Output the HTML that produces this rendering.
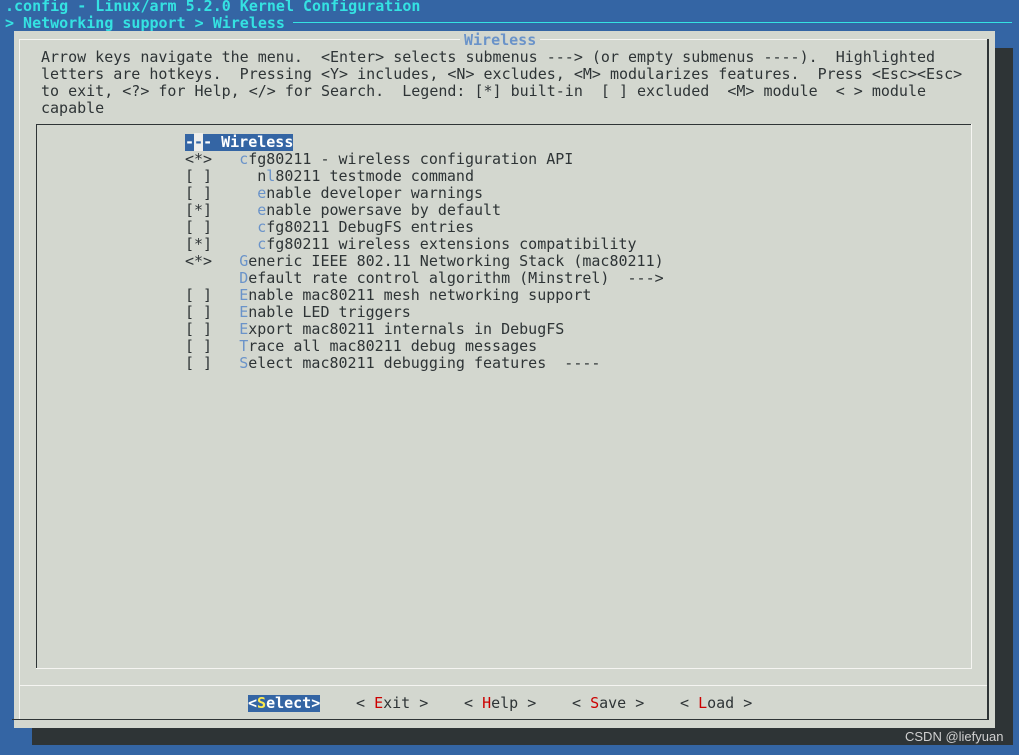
<!DOCTYPE html>
<html><head><meta charset="utf-8"><style>
body{margin:0;width:1019px;height:755px;background:#3465a4;position:relative;overflow:hidden;font-family:"DejaVu Sans Mono","Liberation Mono",monospace;font-size:15px;}
.t{position:absolute;white-space:pre;line-height:17px;color:#2e3436;}
.c{color:#34e2e2;font-weight:bold;}
.h{color:#6a93c9;}
.r{color:#cc0000;}
.abs{position:absolute;}
</style></head><body>
<div class="t c" style="left:5px;top:-2px;">.config - Linux/arm 5.2.0 Kernel Configuration</div>
<div class="t c" style="left:5px;top:15px;">&gt; Networking support &gt; Wireless</div>
<div class="abs" style="left:293px;top:22px;width:719px;height:1px;background:#34e2e2"></div>
<div class="abs" style="left:32px;top:48px;width:981px;height:697px;background:#2e3436"></div>
<div class="abs" style="left:14px;top:31px;width:981px;height:697px;background:#d3d7cf"></div>
<div class="abs" style="left:19px;top:39px;width:968px;height:1px;background:#f5f5f2"></div>
<div class="abs" style="left:19px;top:39px;width:1px;height:680px;background:#f5f5f2"></div>
<div class="abs" style="left:987px;top:39px;width:2px;height:681px;background:#2e3436"></div>
<div class="abs" style="left:12px;top:719px;width:977px;height:1px;background:#2e3436"></div>
<div class="abs" style="left:19px;top:685px;width:968px;height:1px;background:#f5f5f2"></div>
<div class="t" style="left:460px;top:32px;background:#d3d7cf;color:#6a93c9;font-weight:bold;padding:0 4px;">Wireless</div>
<div class="t" style="left:41px;top:49px;">Arrow keys navigate the menu.  &lt;Enter&gt; selects submenus ---&gt; (or empty submenus ----).  Highlighted
letters are hotkeys.  Pressing &lt;Y&gt; includes, &lt;N&gt; excludes, &lt;M&gt; modularizes features.  Press &lt;Esc&gt;&lt;Esc&gt;
to exit, &lt;?&gt; for Help, &lt;/&gt; for Search.  Legend: [*] built-in  [ ] excluded  &lt;M&gt; module  &lt; &gt; module
capable</div>
<div class="abs" style="left:36px;top:124px;width:936px;height:1px;background:#2e3436"></div>
<div class="abs" style="left:36px;top:124px;width:1px;height:545px;background:#2e3436"></div>
<div class="abs" style="left:36px;top:668px;width:936px;height:1px;background:#f5f5f2"></div>
<div class="abs" style="left:971px;top:124px;width:1px;height:545px;background:#f5f5f2"></div>
<div class="abs" style="left:185px;top:134px;width:108px;height:17px;background:#3465a4"></div>
<div class="t" style="left:185px;top:134px;"><span style="color:#fff;font-weight:bold">-<span style="background:#eeeeec;color:#3465a4">-</span>- Wireless</span>
&lt;*&gt;   <span class="h">c</span>fg80211 - wireless configuration API
[ ]     n<span class="h">l</span>80211 testmode command
[ ]     <span class="h">e</span>nable developer warnings
[*]     <span class="h">e</span>nable powersave by default
[ ]     <span class="h">c</span>fg80211 DebugFS entries
[*]     <span class="h">c</span>fg80211 wireless extensions compatibility
&lt;*&gt;   <span class="h">G</span>eneric IEEE 802.11 Networking Stack (mac80211)
      <span class="h">D</span>efault rate control algorithm (Minstrel)  ---&gt;
[ ]   <span class="h">E</span>nable mac80211 mesh networking support
[ ]   <span class="h">E</span>nable LED triggers
[ ]   <span class="h">E</span>xport mac80211 internals in DebugFS
[ ]   <span class="h">T</span>race all mac80211 debug messages
[ ]   <span class="h">S</span>elect mac80211 debugging features  ----</div>
<div class="t" style="left:248px;top:695px;background:#3465a4;color:#fff;font-weight:bold;">&lt;<span style="color:#fce94f">S</span>elect&gt;</div>
<div class="t" style="left:356px;top:695px;">&lt; <span class="r">E</span>xit &gt;</div>
<div class="t" style="left:464px;top:695px;">&lt; <span class="r">H</span>elp &gt;</div>
<div class="t" style="left:572px;top:695px;">&lt; <span class="r">S</span>ave &gt;</div>
<div class="t" style="left:680px;top:695px;">&lt; <span class="r">L</span>oad &gt;</div>
<div class="abs" style="left:905px;top:729px;font-family:'Liberation Sans',sans-serif;font-size:13px;color:#d0d0d0;">CSDN @liefyuan</div>
</body></html>
